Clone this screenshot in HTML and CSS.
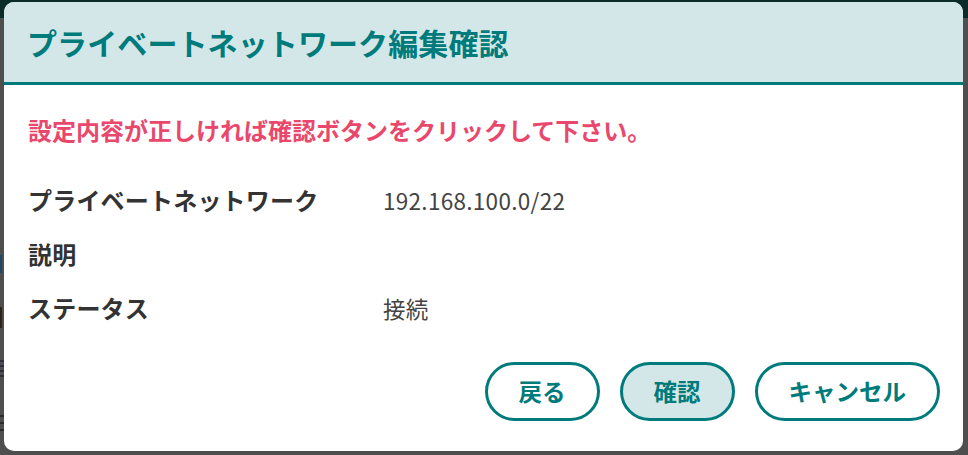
FILE: index.html
```html
<!DOCTYPE html>
<html lang="ja">
<head>
<meta charset="utf-8">
<title>プライベートネットワーク編集確認</title>
<link rel="stylesheet" href="styles.css">
</head>
<body>
<div class="page">
  <div class="page-top"></div>
  <div class="page-body">
    <span class="bg-mark bg-mark-blue"></span>
    <span class="bg-mark bg-mark-dark"></span>
    <span class="bg-mark bg-mark-lines1"></span>
    <span class="bg-mark bg-mark-lines2"></span>
  </div>
</div>
<div class="dialog">
  <div class="dialog-header">
    <h1 class="dialog-title">プライベートネットワーク編集確認</h1>
  </div>
  <div class="dialog-body">
    <p class="notice">設定内容が正しければ確認ボタンをクリックして下さい。</p>
    <div class="fields">
      <div class="field-label">プライベートネットワーク</div>
      <div class="field-value">192.168.100.0/22</div>
      <div class="field-label">説明</div>
      <div class="field-value"></div>
      <div class="field-label">ステータス</div>
      <div class="field-value">接続</div>
    </div>
    <div class="actions">
      <button class="btn">戻る</button>
      <button class="btn btn-primary">確認</button>
      <button class="btn">キャンセル</button>
    </div>
  </div>
</div>
</body>
</html>
```
FILE: styles.css
```css
html, body {
  margin: 0;
  padding: 0;
  height: 100%;
}
body {
  background: #4e4e4e;
  font-family: "Noto Sans CJK JP", "Noto Sans", sans-serif;
  overflow: hidden;
}
.page {
  display: flex;
  flex-direction: column;
  height: 100%;
}
.page-top {
  height: 18px;
  background: #0b2a2a;
}
.page-body {
  flex: 1;
  position: relative;
}
.bg-mark {
  position: absolute;
  left: 0;
  display: block;
}
.bg-mark-blue {
  top: 237px;
  width: 2px;
  height: 18px;
  background: #1b4a66;
}
.bg-mark-dark {
  top: 289px;
  width: 2px;
  height: 21px;
  background: #2a2418;
}
.bg-mark-lines1 {
  top: 342px;
  width: 4px;
  height: 20px;
  background: repeating-linear-gradient(#2e2e3e 0 2px, transparent 2px 5px);
}
.bg-mark-lines2 {
  top: 397px;
  width: 4px;
  height: 20px;
  background: repeating-linear-gradient(#2a2a2a 0 2px, transparent 2px 7px);
}
.dialog {
  position: absolute;
  left: 4px;
  top: 2px;
  width: 959px;
  height: 449px;
  background: #ffffff;
  border-radius: 10px;
  overflow: hidden;
  display: flex;
  flex-direction: column;
}
.dialog-header {
  height: 80px;
  background: #d4e7e8;
  border-bottom: 3px solid #007b7b;
  display: flex;
  align-items: center;
  padding-left: 23px;
}
.dialog-title {
  margin: 0;
  font-size: 30px;
  font-weight: 700;
  color: #007b7b;
  line-height: 1;
  letter-spacing: 0.1px;
}
.dialog-body {
  flex: 1;
  padding: 27px 23px 30px 24px;
  display: flex;
  flex-direction: column;
}
.notice {
  margin: 0;
  font-size: 24px;
  line-height: 36px;
  font-weight: 700;
  color: #e9486c;
}
.fields {
  margin-top: 25px;
  display: grid;
  grid-template-columns: 355px 1fr;
  grid-auto-rows: 54px;
  align-items: center;
}
.field-label {
  font-size: 24px;
  font-weight: 700;
  color: #333333;
  line-height: 1;
  letter-spacing: 0.2px;
}
.field-value {
  font-size: 22.5px;
  font-weight: 400;
  color: #444444;
  line-height: 1;
  letter-spacing: 0.3px;
}
.actions {
  margin-top: 27px;
  display: flex;
  justify-content: flex-end;
  gap: 20px;
}
.btn {
  height: 59px;
  padding: 0 31px;
  border: 3px solid #007b7b;
  border-radius: 30px;
  background: #ffffff;
  color: #007b7b;
  font-family: "Noto Sans CJK JP", "Noto Sans", sans-serif;
  font-size: 23.5px;
  font-weight: 700;
  line-height: 1;
  cursor: pointer;
}
.btn-primary {
  background: #d4e7e8;
}
```
